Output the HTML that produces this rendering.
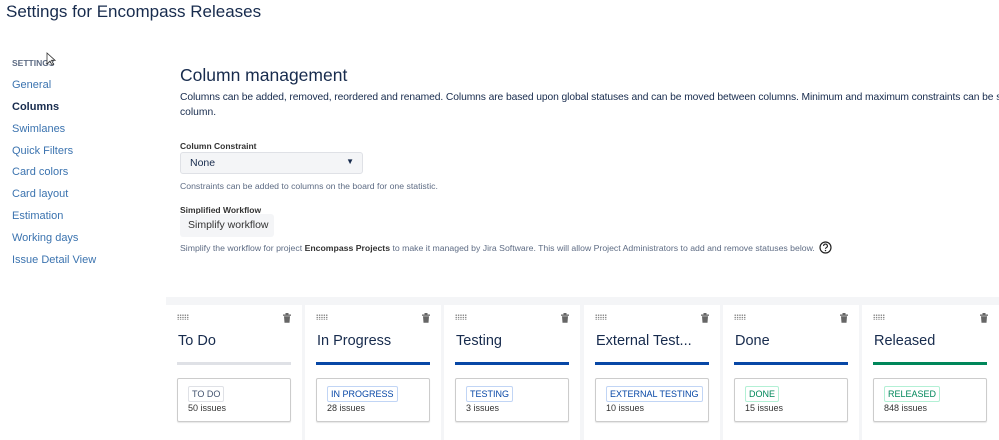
<!DOCTYPE html>
<html style="overflow:hidden"><head><meta charset="utf-8"><style>
*{margin:0;padding:0;box-sizing:border-box}
html,body{width:999px;height:440px;overflow:hidden}
body{background:#fff;font-family:"Liberation Sans",sans-serif;color:#172b4d;position:relative}
.a{position:absolute;white-space:nowrap}
.nav{font-size:11px;color:#3b73af}
.col{position:absolute;top:305px;width:136px;height:135px;background:#fff}
.grip{position:absolute;left:11px;top:9px;width:12px;height:6px;background-image:radial-gradient(circle,#777 0.6px,transparent 0.8px);background-size:2.4px 2.4px}
.trash{position:absolute;right:11px;top:8px}
.ct{position:absolute;left:12px;top:28px;font-size:14.5px;color:#172b4d}
.bar{position:absolute;left:11px;top:57px;width:114px;height:3px;background:#0747a6}
.card{position:absolute;left:11px;top:73px;width:114px;height:44px;border:1px solid #ccc;border-radius:2px;box-shadow:0 1px 1px rgba(0,0,0,.1)}
.lz{position:absolute;left:10px;top:7px;font-size:9px;padding:2px 3px;border:1px solid #c1d5f5;border-radius:2px;color:#0747a6;white-space:nowrap;line-height:10px}
.n{position:absolute;left:10px;top:24px;font-size:9px;color:#333;white-space:nowrap}
</style></head><body>
<div class="a" style="left:6px;top:2px;font-size:17px;color:#172b4d">Settings for Encompass Releases</div>
<div class="a" style="left:12px;top:58px;font-size:8.5px;font-weight:bold;color:#5e6c84">SETTINGS</div>
<svg class="a" style="left:46px;top:52px" width="10" height="14" viewBox="0 0 10 14"><path d="M1 1v11l3-3 2 4 1.5-.7-2-4H9z" fill="#fff" stroke="#333" stroke-width=".8"/></svg>
<div class="a nav" style="left:12px;top:79px">General</div>
<div class="a nav" style="left:12px;top:101px;color:#172b4d;font-weight:bold">Columns</div>
<div class="a nav" style="left:12px;top:123px">Swimlanes</div>
<div class="a nav" style="left:12px;top:145px">Quick Filters</div>
<div class="a nav" style="left:12px;top:166px">Card colors</div>
<div class="a nav" style="left:12px;top:188px">Card layout</div>
<div class="a nav" style="left:12px;top:210px">Estimation</div>
<div class="a nav" style="left:12px;top:232px">Working days</div>
<div class="a nav" style="left:12px;top:254px">Issue Detail View</div>

<div class="a" style="left:180px;top:65px;font-size:17.5px;color:#172b4d">Column management</div>
<div style="position:absolute;left:180px;top:92px;width:819px;height:30px;overflow:hidden">
<div class="a" style="left:0;top:0;font-size:10.3px;color:#172b4d;letter-spacing:-0.1px">Columns can be added, removed, reordered and renamed. Columns are based upon global statuses and can be moved between columns. Minimum and maximum constraints can be set for each</div>
<div class="a" style="left:0;top:15px;font-size:10.3px;color:#172b4d">column.</div></div>
<div class="a" style="left:180px;top:141px;font-size:8.5px;font-weight:bold;color:#333">Column Constraint</div>
<div class="a" style="left:180px;top:152px;width:183px;height:22px;background:#f4f5f7;border:1px solid #dfe1e6;border-radius:3px;font-size:10.5px;padding:4px 9px;color:#172b4d">None<span style="position:absolute;right:8px;top:4px;font-size:8px">▼</span></div>
<div class="a" style="left:180px;top:181px;font-size:8.7px;color:#5e6c84">Constraints can be added to columns on the board for one statistic.</div>
<div class="a" style="left:180px;top:205px;font-size:8.5px;font-weight:bold;color:#333">Simplified Workflow</div>
<div class="a" style="left:180px;top:214px;width:94px;height:23px;background:#f4f5f7;border-radius:3px;font-size:10.5px;padding:5px 8px;color:#333">Simplify workflow</div>
<div class="a" style="left:180px;top:243px;font-size:8.7px;color:#5e6c84">Simplify the workflow for project <b style="color:#333">Encompass Projects</b> to make it managed by Jira Software. This will allow Project Administrators to add and remove statuses below.</div>
<svg class="a" style="left:819px;top:241px" width="13" height="13" viewBox="0 0 13 13"><circle cx="6.5" cy="6.5" r="5.5" fill="none" stroke="#222" stroke-width="1.2"/><path d="M4.6 5a1.9 1.9 0 1 1 2.6 1.7c-.5.3-.7.6-.7 1.2" fill="none" stroke="#222" stroke-width="1.1"/><circle cx="6.5" cy="9.6" r=".7" fill="#222"/></svg>

<div class="a" style="left:166px;top:297px;width:833px;height:143px;background:#f4f5f7"></div>

<div class="col" style="left:166px"><div class="grip"></div><svg class="trash" width="8" height="10" viewBox="0 0 8 10"><rect x="0" y="1.5" width="8" height="1.3" fill="#666"/><rect x="2.5" y="0" width="3" height="1.5" fill="#666"/><path d="M1 3.3h6l-.5 6.5h-5z" fill="#666"/></svg><div class="ct">To Do</div><div class="bar" style="background:#dfe1e6"></div><div class="card"><div class="lz" style="color:#42526e;border-color:#dfe1e6">TO DO</div><div class="n">50 issues</div></div></div>
<div class="col" style="left:305px"><div class="grip"></div><svg class="trash" width="8" height="10" viewBox="0 0 8 10"><rect x="0" y="1.5" width="8" height="1.3" fill="#666"/><rect x="2.5" y="0" width="3" height="1.5" fill="#666"/><path d="M1 3.3h6l-.5 6.5h-5z" fill="#666"/></svg><div class="ct">In Progress</div><div class="bar"></div><div class="card"><div class="lz">IN PROGRESS</div><div class="n">28 issues</div></div></div>
<div class="col" style="left:444px"><div class="grip"></div><svg class="trash" width="8" height="10" viewBox="0 0 8 10"><rect x="0" y="1.5" width="8" height="1.3" fill="#666"/><rect x="2.5" y="0" width="3" height="1.5" fill="#666"/><path d="M1 3.3h6l-.5 6.5h-5z" fill="#666"/></svg><div class="ct">Testing</div><div class="bar"></div><div class="card"><div class="lz">TESTING</div><div class="n">3 issues</div></div></div>
<div class="col" style="left:584px"><div class="grip"></div><svg class="trash" width="8" height="10" viewBox="0 0 8 10"><rect x="0" y="1.5" width="8" height="1.3" fill="#666"/><rect x="2.5" y="0" width="3" height="1.5" fill="#666"/><path d="M1 3.3h6l-.5 6.5h-5z" fill="#666"/></svg><div class="ct">External Test...</div><div class="bar"></div><div class="card"><div class="lz">EXTERNAL TESTING</div><div class="n">10 issues</div></div></div>
<div class="col" style="left:723px"><div class="grip"></div><svg class="trash" width="8" height="10" viewBox="0 0 8 10"><rect x="0" y="1.5" width="8" height="1.3" fill="#666"/><rect x="2.5" y="0" width="3" height="1.5" fill="#666"/><path d="M1 3.3h6l-.5 6.5h-5z" fill="#666"/></svg><div class="ct">Done</div><div class="bar"></div><div class="card"><div class="lz" style="color:#00875a;border-color:#b3f0d5">DONE</div><div class="n">15 issues</div></div></div>
<div class="col" style="left:862px;width:137px"><div class="grip"></div><svg class="trash" width="8" height="10" viewBox="0 0 8 10"><rect x="0" y="1.5" width="8" height="1.3" fill="#666"/><rect x="2.5" y="0" width="3" height="1.5" fill="#666"/><path d="M1 3.3h6l-.5 6.5h-5z" fill="#666"/></svg><div class="ct">Released</div><div class="bar" style="background:#00875a"></div><div class="card"><div class="lz" style="color:#00875a;border-color:#b3f0d5">RELEASED</div><div class="n">848 issues</div></div></div>
</body></html>
